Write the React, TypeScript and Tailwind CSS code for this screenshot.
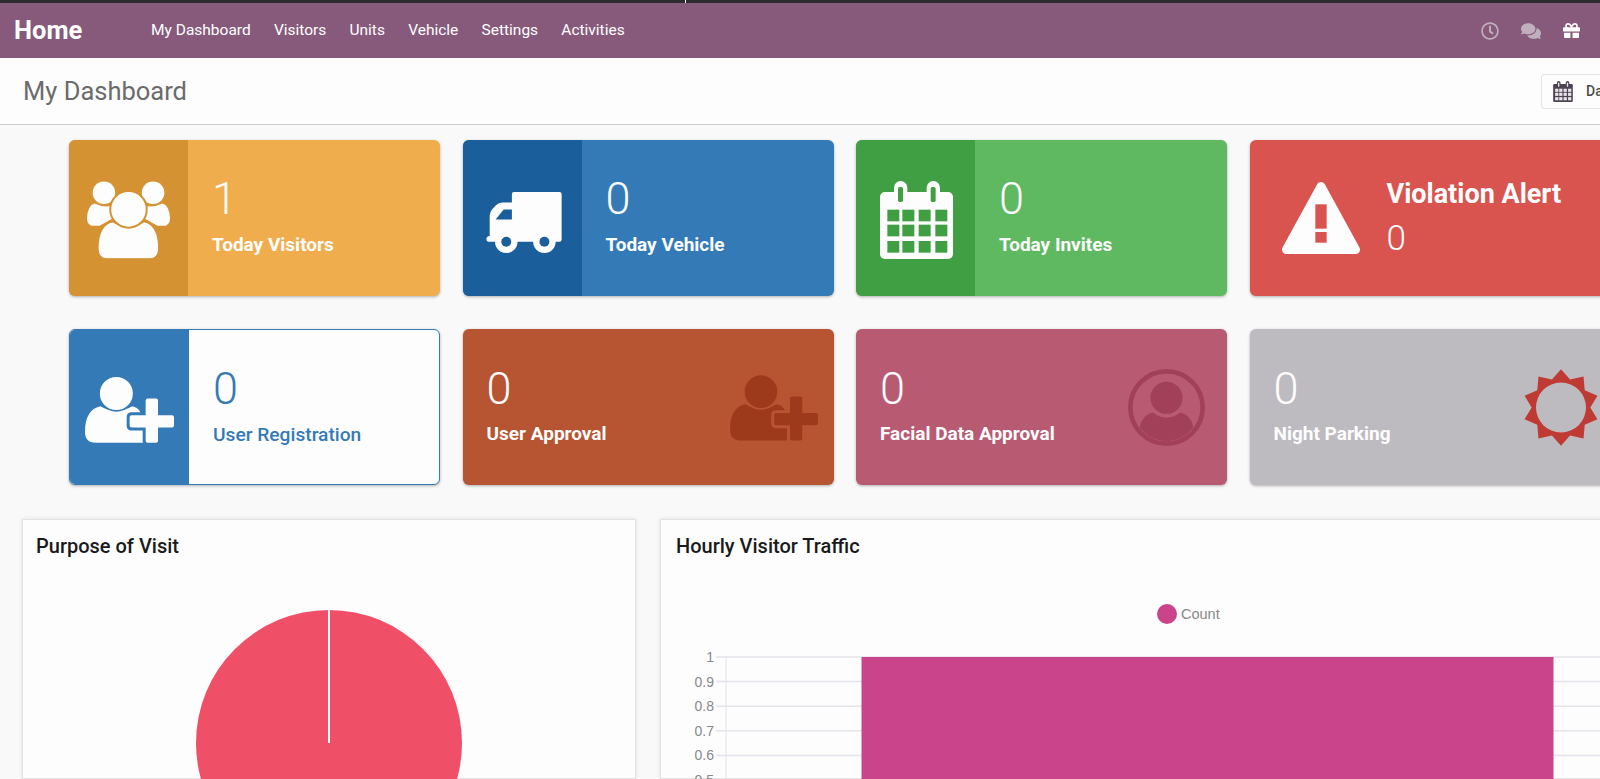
import type { ReactNode } from "react";
import { FaComments, FaGift, FaRegClock } from "react-icons/fa";

type IconProps = { fg: string; bg: string; className?: string };

function GroupIcon({ fg, bg, className }: IconProps) {
  return (
    <svg viewBox="82 150 250 234" className={className}>
      <circle cx="133" cy="185" r="34" fill={fg} />
      <circle cx="281" cy="185" r="34" fill={fg} />
      <path d="M82 262 Q84 222 105 217 Q135 232 165 222 L160 262 L120 284 L95 284 Q82 280 82 262Z" fill={fg} />
      <path d="M332 262 Q330 222 309 217 Q279 232 249 222 L254 262 L294 284 L319 284 Q332 280 332 262Z" fill={fg} />
      <path d="M115 352 Q115 282 160 272 Q207 300 254 272 Q298 282 298 352 Q298 384 270 384 L143 384 Q115 384 115 352Z" fill={fg} stroke={bg} strokeWidth="4" />
      <circle cx="207" cy="235" r="55" fill={fg} stroke={bg} strokeWidth="6" />
    </svg>
  );
}

function TruckIcon({ fg, bg, className }: IconProps) {
  return (
    <svg viewBox="78 183 227 184" className={className}>
      <path
        d="M155 189 Q155 183 161 183 L298 183 Q305 183 305 190 L305 326 Q305 333 298 333 L84 333 Q78 333 78 325 Q78 317 88 316 L88 254 Q88 245 95 236 L107 223 Q115 215 126 215 L155 215Z"
        fill={fg}
      />
      <path d="M106 266 L130 236 L155 236 L155 266Z" fill={bg} />
      <circle cx="138" cy="333" r="34" fill={fg} />
      <circle cx="253" cy="333" r="34" fill={fg} />
      <circle cx="138" cy="333" r="15" fill={bg} />
      <circle cx="253" cy="333" r="15" fill={bg} />
    </svg>
  );
}

function CalendarIcon({ fg, bg, className }: IconProps) {
  const xs = [110, 155, 204, 254];
  const ys = [236, 281, 330];
  return (
    <svg viewBox="88 150 219 234" className={className}>
      <rect x="88" y="183" width="219" height="201" rx="15" fill={fg} />
      <rect x="130" y="150" width="40" height="70" rx="20" fill={fg} />
      <rect x="228" y="150" width="40" height="70" rx="20" fill={fg} />
      <rect x="142" y="168" width="15" height="45" rx="5" fill={bg} />
      <rect x="240" y="168" width="15" height="45" rx="5" fill={bg} />
      {ys.map((y) =>
        xs.map((x) => <rect key={`${x}-${y}`} x={x} y={y} width="36" height="35" fill={bg} />)
      )}
    </svg>
  );
}

function WarningIcon({ fg, bg, className }: IconProps) {
  return (
    <svg viewBox="128 148 234 216" className={className}>
      <polygon points="245,161 141,351 349,351" fill={fg} stroke={fg} strokeWidth="26" strokeLinejoin="round" />
      <rect x="228" y="215" width="34" height="73" fill={bg} />
      <rect x="228" y="298" width="34" height="32" fill={bg} />
    </svg>
  );
}

function UserPlusIcon({ fg, bg, className }: IconProps) {
  return (
    <svg viewBox="76 168 267 200" className={className}>
      <path d="M76 335 Q76 268 122 258 Q170 285 218 258 Q245 262 250 300 L250 368 L108 368 Q76 368 76 335Z" fill={fg} />
      <circle cx="170" cy="220" r="52" fill={fg} stroke={bg} strokeWidth="5" />
      <path
        d="M258 241 Q258 235 264 235 L289 235 Q295 235 295 241 L295 285 L337 285 Q343 285 343 291 L343 316 Q343 322 337 322 L295 322 L295 362 Q295 368 289 368 L264 368 Q258 368 258 362 L258 322 L216 322 Q210 322 210 316 L210 291 Q210 285 216 285 L258 285Z"
        fill={fg}
        stroke={bg}
        strokeWidth="18"
        paintOrder="stroke"
      />
    </svg>
  );
}

function AvatarIcon({ fg, className }: IconProps) {
  return (
    <svg viewBox="838 151 230 230" className={className}>
      <circle cx="953" cy="266" r="108" fill="none" stroke={fg} strokeWidth="14" />
      <path d="M873 325 Q880 288 912 281 Q953 312 994 281 Q1026 288 1033 325 Q1002 366 953 366 Q904 366 873 325Z" fill={fg} />
      <circle cx="953" cy="237" r="48" fill={fg} />
    </svg>
  );
}

function SunIcon({ fg, bg, className }: IconProps) {
  const pts: string[] = [];
  for (let i = 0; i < 20; i++) {
    const r = i % 2 === 0 ? 115 : 88;
    const a = (-90 + i * 18) * (Math.PI / 180);
    pts.push(`${(r * Math.cos(a)).toFixed(1)},${(r * Math.sin(a)).toFixed(1)}`);
  }
  return (
    <svg viewBox="-111 -115 222 230" className={className}>
      <polygon points={pts.join(" ")} fill={fg} />
      <circle cx="0" cy="0" r="75" fill={bg} />
    </svg>
  );
}

function PanelCard({
  color,
  dark,
  icon,
  value,
  label,
}: {
  color: string;
  dark: string;
  icon: ReactNode;
  value: string;
  label: string;
}) {
  return (
    <div className={`flex h-[156px] w-[371px] shrink-0 overflow-hidden rounded-[6px] text-[#fdfdfd] shadow-[0_1px_3px_rgba(0,0,0,0.3)] ${color}`}>
      <div className={`flex w-[119px] shrink-0 items-center justify-center pt-[3px] ${dark}`}>{icon}</div>
      <div className="pt-[34px] pl-[24px]">
        <div className="text-[45px] leading-[50px] font-light">{value}</div>
        <div className="mt-[9px] text-[19px] leading-[24px] font-bold">{label}</div>
      </div>
    </div>
  );
}

function StatCard({
  color,
  icon,
  value,
  label,
  padRight,
}: {
  color: string;
  icon: ReactNode;
  value: string;
  label: string;
  padRight: string;
}) {
  return (
    <div className={`flex h-[156px] w-[371px] shrink-0 items-center justify-between rounded-[6px] pl-[24px] text-[#fdfdfd] shadow-[0_1px_3px_rgba(0,0,0,0.3)] ${color} ${padRight}`}>
      <div className="mb-[5px]">
        <div className="text-[45px] leading-[50px] font-light">{value}</div>
        <div className="mt-[8px] text-[19px] leading-[24px] font-bold">{label}</div>
      </div>
      {icon}
    </div>
  );
}

const gridRows = [
  { y: 657, label: "1" },
  { y: 681.6, label: "0.9" },
  { y: 706.2, label: "0.8" },
  { y: 730.8, label: "0.7" },
  { y: 755.4, label: "0.6" },
  { y: 780, label: "0.5" },
];

const navItems = ["My Dashboard", "Visitors", "Units", "Vehicle", "Settings", "Activities"];

export default function App() {
  return (
    <div className="relative flex h-screen w-full flex-col overflow-hidden bg-[#f9f9f9] font-['Roboto',sans-serif]">
      <div className="h-[3px] shrink-0 bg-[#2b2b2d]" />
      <div className="absolute top-0 left-[685px] h-[3px] w-px bg-white" />

      <nav className="flex h-[55px] shrink-0 items-center bg-[#875a7b] text-white">
        <span className="ml-[14px] w-[137px] text-[25.5px] font-bold">Home</span>
        <div className="flex gap-[23.2px] text-[15.5px]">
          {navItems.map((item) => (
            <span key={item}>{item}</span>
          ))}
        </div>
        <div className="ml-auto flex items-center">
          <FaRegClock className="mr-[22px] text-[18px] text-[#c0afbc]" />
          <FaComments className="mr-[22px] text-[20px] text-[#c0afbc]" />
          <FaGift className="mr-[20px] text-[17px] text-white" />
        </div>
      </nav>

      <div className="flex h-[67px] shrink-0 items-center justify-between border-b border-[#ccc] bg-[#fdfdfd]">
        <h1 className="ml-[23px] text-[25.5px] text-[#6b6b6b]">My Dashboard</h1>
        <div className="flex h-[35px] w-[59px] shrink-0 items-center overflow-hidden rounded-l-[4px] border border-r-0 border-[#e4e4e4] pl-[11px]">
          <CalendarIcon fg="#4c4352" bg="#e8e4ea" className="h-[21px] w-[20px] shrink-0" />
          <span className="ml-[13px] text-[14px] font-medium whitespace-nowrap text-[#4c4c4c]">Date</span>
        </div>
      </div>

      <div className="flex gap-[22.5px] pt-[15px] pl-[69px]">
        <PanelCard color="bg-[#f0ad4e]" dark="bg-[#d49233]" value="1" label="Today Visitors"
          icon={<GroupIcon fg="#fdfdfd" bg="#d49233" className="h-[78px] w-[83px]" />} />
        <PanelCard color="bg-[#337ab7]" dark="bg-[#1a5f9c]" value="0" label="Today Vehicle"
          icon={<TruckIcon fg="#fdfdfd" bg="#1a5f9c" className="mt-[6px] ml-[3px] h-[61px] w-[76px]" />} />
        <PanelCard color="bg-[#5fb960]" dark="bg-[#409e43]" value="0" label="Today Invites"
          icon={<CalendarIcon fg="#fdfdfd" bg="#409e43" className="ml-[1px] h-[78px] w-[73px]" />} />
        <div className="flex h-[156px] w-[371px] shrink-0 items-center rounded-[6px] bg-[#d9534f] pl-[32px] text-[#fdfdfd] shadow-[0_1px_3px_rgba(0,0,0,0.3)]">
          <WarningIcon fg="#fdfdfd" bg="#d9534f" className="h-[72px] w-[78px] shrink-0" />
          <div className="ml-[27px]">
            <div className="text-[27px] leading-[32px] font-bold">Violation Alert</div>
            <div className="mt-[9px] text-[35px] leading-[40px] font-light">0</div>
          </div>
        </div>
      </div>

      <div className="flex gap-[22.5px] pt-[33px] pl-[69px]">
        <div className="flex h-[156px] w-[371px] shrink-0 overflow-hidden rounded-[6px] border border-[#337ab7] bg-[#fdfdfd] text-[#337ab7] shadow-[0_1px_3px_rgba(0,0,0,0.3)]">
          <div className="flex w-[119px] shrink-0 items-center justify-center bg-[#337ab7] pt-[4px]">
            <UserPlusIcon fg="#fdfdfd" bg="#337ab7" className="h-[67px] w-[89px]" />
          </div>
          <div className="pt-[34px] pl-[24px]">
            <div className="text-[45px] leading-[50px] font-light">0</div>
            <div className="mt-[9px] text-[19.2px] leading-[24px] font-medium">User Registration</div>
          </div>
        </div>
        <StatCard color="bg-[#b75431]" value="0" label="User Approval" padRight="pr-[16px]"
          icon={<UserPlusIcon fg="#9e3a1c" bg="#b75431" className="h-[67px] w-[88px] shrink-0" />} />
        <StatCard color="bg-[#b85b72]" value="0" label="Facial Data Approval" padRight="pr-[22px]"
          icon={<AvatarIcon fg="#a24059" bg="#b85b72" className="h-[77px] w-[77px] shrink-0" />} />
        <StatCard color="bg-[#bdbbc0]" value="0" label="Night Parking" padRight="pr-[23px]"
          icon={<SunIcon fg="#c03a34" bg="#bdbbc0" className="h-[77px] w-[74px] shrink-0" />} />
      </div>

      <div className="flex min-h-0 flex-1 gap-[24px] pt-[34px] pl-[22px]">
        <section className="w-[614px] shrink-0 border border-[#e3e3e3] bg-[#fdfdfd] shadow-[0_0_4px_rgba(0,0,0,0.1)]">
          <h2 className="px-[13px] pt-[13px] text-[20px] leading-[27px] font-medium text-[#1a1a1a]">Purpose of Visit</h2>
          <svg viewBox="23 560 612 219" className="block h-[219px] w-[612px]">
            <circle cx="329" cy="743" r="133" fill="#ef5068" />
            <line x1="329" y1="610" x2="329" y2="743" stroke="#fdfdfd" strokeWidth="2" />
          </svg>
        </section>

        <section className="w-[960px] shrink-0 border border-[#e3e3e3] bg-[#fdfdfd] shadow-[0_0_4px_rgba(0,0,0,0.1)]">
          <h2 className="px-[15px] pt-[13px] text-[20px] leading-[27px] font-medium text-[#1a1a1a]">Hourly Visitor Traffic</h2>
          <svg viewBox="661 560 958 219" className="block h-[219px] w-[958px]">
            <circle cx="1167" cy="614" r="10" fill="#c9448a" />
            <text x="1181" y="618.5" fontSize="14.5" fontFamily="Liberation Sans" fill="#888">Count</text>
            {gridRows.map((row) => (
              <g key={row.label}>
                <line x1="716" y1={row.y} x2="1620" y2={row.y} stroke="#e4e4ea" strokeWidth="1.5" />
                <text x="714" y={row.y + 5} textAnchor="end" fontSize="14" fontFamily="Liberation Sans" fill="#888">{row.label}</text>
              </g>
            ))}
            <line x1="726" y1="657" x2="726" y2="779" stroke="#e4e4ea" strokeWidth="1" />
            <rect x="861.5" y="657" width="692" height="122" fill="#c9448a" />
          </svg>
        </section>
      </div>
    </div>
  );
}
